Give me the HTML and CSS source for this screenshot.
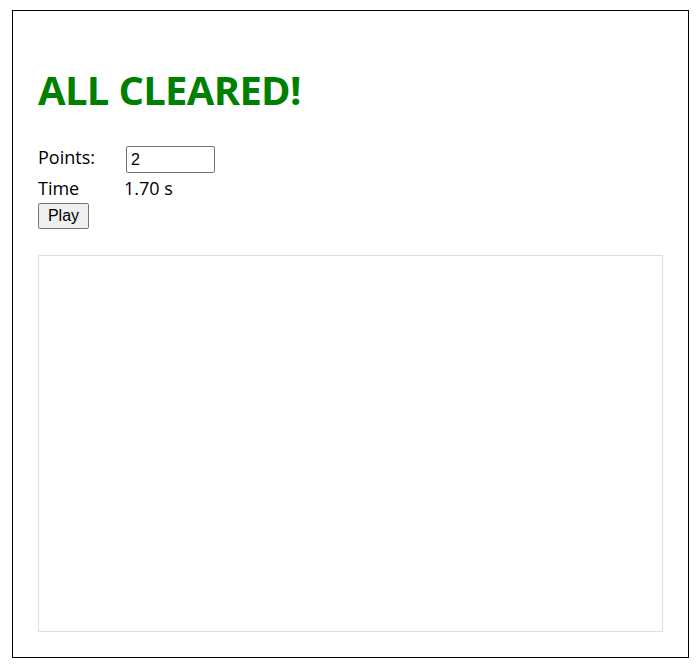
FILE: index.html
```html
<!DOCTYPE html>
<html>
<head>
<meta charset="utf-8">
<title>Game</title>
<link rel="stylesheet" href="styles.css">
</head>
<body>
<div class="container">
  <h1 class="title">ALL CLEARED!</h1>
  <div class="row row-points">
    <span class="label label-points">Points:</span>
    <input class="points-input" type="text" value="2">
  </div>
  <div class="row row-time">
    <span class="label">Time</span>
    <span class="value">1.70 s</span>
  </div>
  <button class="play-btn">Play</button>
  <div class="board"></div>
</div>
</body>
</html>
```
FILE: styles.css
```css
html, body {
  margin: 0;
  padding: 0;
  background: #fff;
}
body {
  font-family: "Open Sans", "Noto Sans", sans-serif;
  color: #000;
}
.container {
  margin: 10px 0 0 12px;
  width: 625px;
  border: 1px solid #000;
  padding: 25px;
}
.title {
  margin: 30px 0 32px 0;
  font-size: 40px;
  line-height: 48px;
  font-weight: 700;
  letter-spacing: -0.7px;
  color: #008000;
}
.row {
  display: flex;
  align-items: baseline;
  font-size: 18px;
  line-height: 24px;
}
.row-points {
  height: 27px;
  align-items: flex-start;
}
.label-points {
  line-height: 22px;
}
.row-time {
  margin-top: 3px;
  height: 24px;
}
.label {
  width: 86px;
  flex: none;
}
.points-input {
  box-sizing: border-box;
  margin: 0 0 0 2px;
  width: 89px;
  height: 27px;
  padding: 1px 4px;
  border: 1px solid #767676;
  border-radius: 2px;
  font-family: "Liberation Sans", Arial, sans-serif;
  font-size: 16px;
  color: #000;
}
.play-btn {
  display: block;
  box-sizing: border-box;
  margin-top: 3px;
  width: 51px;
  height: 26px;
  padding: 0;
  border: 1px solid #767676;
  border-radius: 2px;
  background: #efefef;
  font-family: "Liberation Sans", Arial, sans-serif;
  font-size: 16px;
  color: #000;
}
.board {
  margin-top: 26px;
  height: 375px;
  border: 1px solid #ddd;
}
```
